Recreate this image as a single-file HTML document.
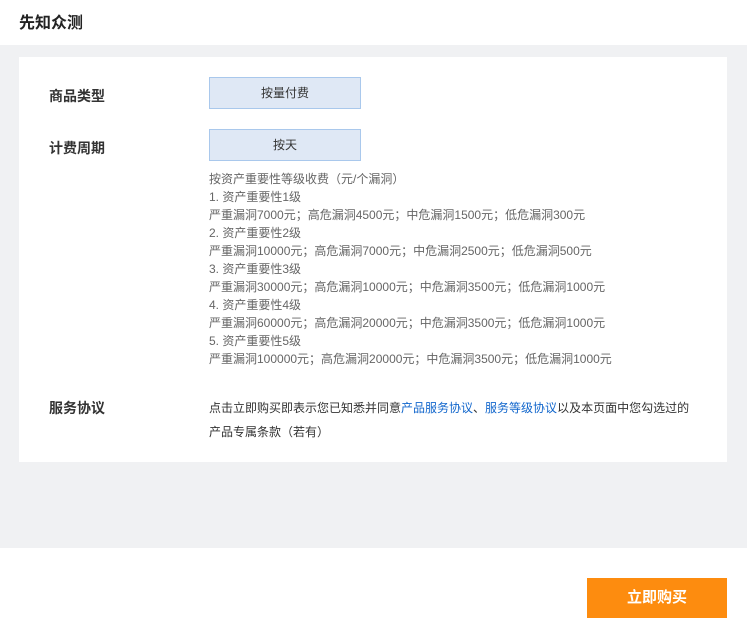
<!DOCTYPE html>
<html><head><meta charset="utf-8"><style>
*{margin:0;padding:0;box-sizing:border-box}
body{width:747px;height:639px;overflow:hidden;background:#f0f1f3;font-family:"Liberation Sans","Noto Sans CJK SC",sans-serif;position:relative}
.hdr{position:absolute;left:0;top:0;width:747px;height:45px;background:#fff}
.hdr span{position:absolute;left:19px;top:9px;font-size:16px;font-weight:bold;color:#222}
.card{position:absolute;left:19px;top:57px;width:708px;height:405px;background:#fff}
.lbl{position:absolute;left:49px;font-size:14px;font-weight:bold;color:#333}
.box{position:absolute;left:209px;width:152px;height:32px;background:#dfe8f5;border:1px solid #a9c8ec;font-size:12px;color:#333;text-align:center;line-height:30px}
.txt{position:absolute;left:209px;top:170px;font-size:12px;line-height:18px;color:#666}
.agr{position:absolute;left:209px;top:396px;font-size:12px;line-height:24px;color:#333}
.agr a{color:#1166cc;text-decoration:none}
.ftr{position:absolute;left:0;top:548px;width:747px;height:91px;background:#fff}
.btn{position:absolute;left:587px;top:578px;width:140px;height:40px;background:#fd8c0f;color:#fff;font-size:15px;font-weight:bold;text-align:center;line-height:40px}
</style></head><body>
<div class="hdr"><span>先知众测</span></div>
<div class="card"></div>
<div class="lbl" style="top:86px">商品类型</div>
<div class="box" style="top:77px">按量付费</div>
<div class="lbl" style="top:138px">计费周期</div>
<div class="box" style="top:129px">按天</div>
<div class="txt">按资产重要性等级收费（元/个漏洞）<br>1. 资产重要性1级<br>严重漏洞7000元；高危漏洞4500元；中危漏洞1500元；低危漏洞300元<br>2. 资产重要性2级<br>严重漏洞10000元；高危漏洞7000元；中危漏洞2500元；低危漏洞500元<br>3. 资产重要性3级<br>严重漏洞30000元；高危漏洞10000元；中危漏洞3500元；低危漏洞1000元<br>4. 资产重要性4级<br>严重漏洞60000元；高危漏洞20000元；中危漏洞3500元；低危漏洞1000元<br>5. 资产重要性5级<br>严重漏洞100000元；高危漏洞20000元；中危漏洞3500元；低危漏洞1000元</div>
<div class="lbl" style="top:398px">服务协议</div>
<div class="agr">点击立即购买即表示您已知悉并同意<a>产品服务协议</a>、<a>服务等级协议</a>以及本页面中您勾选过的<br>产品专属条款（若有）</div>
<div class="ftr"></div>
<div class="btn">立即购买</div>
</body></html>
